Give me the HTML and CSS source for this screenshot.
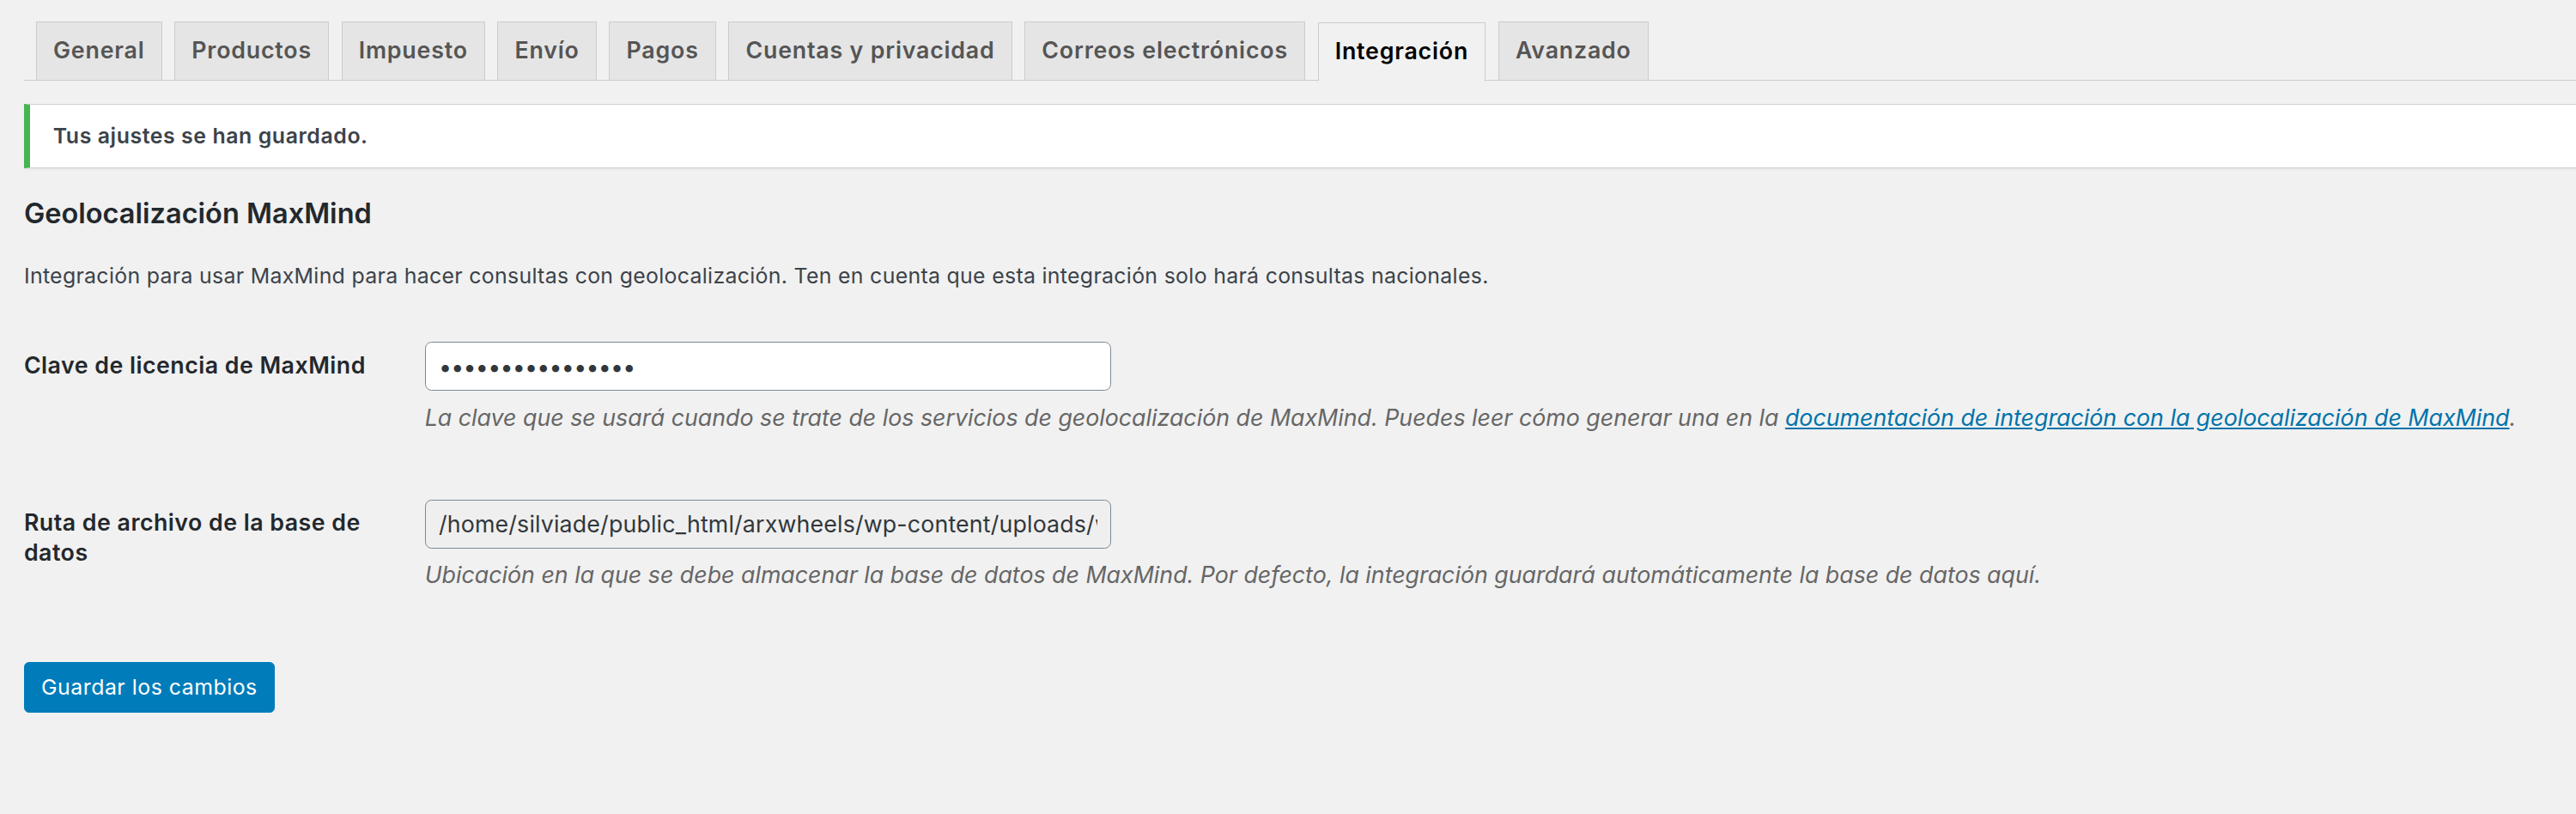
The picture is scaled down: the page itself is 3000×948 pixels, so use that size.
FILE: index.html
```html
<!DOCTYPE html>
<html lang="es">
<head>
<meta charset="utf-8">
<title>Ajustes ‹ Integración</title>
<link rel="stylesheet" href="styles.css">
</head>
<body>
<div class="wrap">
  <nav class="nav-tab-wrapper">
    <a class="nav-tab" href="#">General</a>
    <a class="nav-tab" href="#">Productos</a>
    <a class="nav-tab" href="#">Impuesto</a>
    <a class="nav-tab" href="#">Envío</a>
    <a class="nav-tab" href="#">Pagos</a>
    <a class="nav-tab" href="#">Cuentas y privacidad</a>
    <a class="nav-tab" href="#">Correos electrónicos</a>
    <a class="nav-tab nav-tab-active" href="#">Integración</a>
    <a class="nav-tab" href="#">Avanzado</a>
  </nav>

  <div class="notice notice-success">
    <p><strong>Tus ajustes se han guardado.</strong></p>
  </div>

  <h2 class="section-title">Geolocalización MaxMind</h2>
  <p class="intro">Integración para usar MaxMind para hacer consultas con geolocalización. Ten en cuenta que esta integración solo hará consultas nacionales.</p>

  <table class="form-table">
    <tbody>
      <tr>
        <th scope="row"><label for="license">Clave de licencia de MaxMind</label></th>
        <td>
          <input id="license" class="input-text input-password" type="password" value="abcdefghijklmnop">
          <p class="description">La clave que se usará cuando se trate de los servicios de geolocalización de MaxMind. Puedes leer cómo generar una en la <a href="#">documentación de integración con la geolocalización de MaxMind</a>.</p>
        </td>
      </tr>
      <tr>
        <th scope="row"><label for="dbpath">Ruta de archivo de la base de datos</label></th>
        <td>
          <input id="dbpath" class="input-text input-readonly" type="text" readonly value="/home/silviade/public_html/arxwheels/wp-content/uploads/woocommerce_uploads/GeoLite2-Country.mmdb">
          <p class="description">Ubicación en la que se debe almacenar la base de datos de MaxMind. Por defecto, la integración guardará automáticamente la base de datos aquí.</p>
        </td>
      </tr>
    </tbody>
  </table>

  <p class="submit"><button class="button-primary" type="button">Guardar los cambios</button></p>
</div>
</body>
</html>
```

FILE: styles.css
```css
html {
  background: #f1f1f1;
}

body {
  margin: 0;
  zoom: 1.913;
  background: #f1f1f1;
  color: #444;
  font-family: "Inter", "Roboto", "Liberation Sans", sans-serif;
  font-size: 13px;
  line-height: 1.4em;
  overflow: hidden;
}

.wrap {
  padding-left: 14.6px;
}

/* Tabs */
.nav-tab-wrapper {
  display: flex;
  align-items: flex-end;
  padding-top: 13px;
  border-bottom: 1px solid #ccc;
}

.nav-tab {
  display: block;
  margin-left: 7.6px;
  padding: 5.5px 10px;
  border: 1px solid #ccc;
  border-bottom: none;
  background: #e5e5e5;
  color: #555;
  font-size: 14px;
  line-height: 24px;
  font-weight: 600;
  letter-spacing: 0.42px;
  text-decoration: none;
  white-space: nowrap;
}

.nav-tab:first-child {
  margin-left: 7.3px;
}

.nav-tab-active {
  margin-bottom: -1px;
  border-bottom: 1px solid #f1f1f1;
  background: #f1f1f1;
  color: #000;
}

/* Notice */
.notice {
  margin: 14px 0 0;
  padding: 1px 12px;
  background: #fff;
  border: 1px solid #ccd0d4;
  border-left: 4px solid #46b450;
  border-right: none;
  box-shadow: 0 1px 1px rgba(0, 0, 0, .04);
}

.notice p {
  margin: 6.5px 0;
  padding: 2px;
  font-size: 13px;
  line-height: 1.5;
  color: #3c434a;
}

.notice strong {
  font-weight: 600;
  letter-spacing: 0.3px;
}

/* Section */
.section-title {
  margin: 15.5px 0 0;
  color: #23282d;
  font-size: 17px;
  line-height: 24px;
  font-weight: 600;
}

.intro {
  margin: 16.5px 0 0;
  font-size: 13px;
  line-height: 19.5px;
  letter-spacing: 0.16px;
  color: #3c434a;
}

/* Form table */
.form-table {
  margin-top: 15px;
  border-collapse: collapse;
  width: 100%;
}

.form-table th {
  width: 210px;
  padding: 20px 24px 20px 0;
  vertical-align: top;
  text-align: left;
  color: #23282d;
  font-size: 14px;
  line-height: 18px;
  font-weight: 600;
  letter-spacing: 0.25px;
}

.form-table td {
  padding: 15px 10px 15px 10px;
  vertical-align: top;
}

.input-text {
  display: block;
  box-sizing: border-box;
  width: 418px;
  height: 30px;
  margin: 0;
  padding: 0 8px;
  border: 1px solid #7e8993;
  border-radius: 4px;
  background: #fff;
  color: #32373c;
  font-family: inherit;
  font-size: 14px;
  line-height: 28px;
  letter-spacing: 0.08px;
  outline: none;
}

.input-password {
  letter-spacing: -0.4px;
}

.input-readonly {
  background: #efefef;
}

.description {
  margin: 6px 0 10px;
  font-size: 14px;
  line-height: 20px;
  font-style: italic;
  color: #666;
}

.description a {
  color: #0073aa;
  text-decoration: underline;
}

/* Submit */
.submit {
  margin: 18px 0 0;
}

.button-primary {
  display: inline-block;
  box-sizing: border-box;
  height: 31px;
  padding: 0 10px;
  border: 1px solid #007cba;
  border-radius: 3px;
  background: #007cba;
  color: #fff;
  font-family: inherit;
  font-size: 13px;
  line-height: 29px;
  letter-spacing: 0.26px;
  cursor: pointer;
}
```
